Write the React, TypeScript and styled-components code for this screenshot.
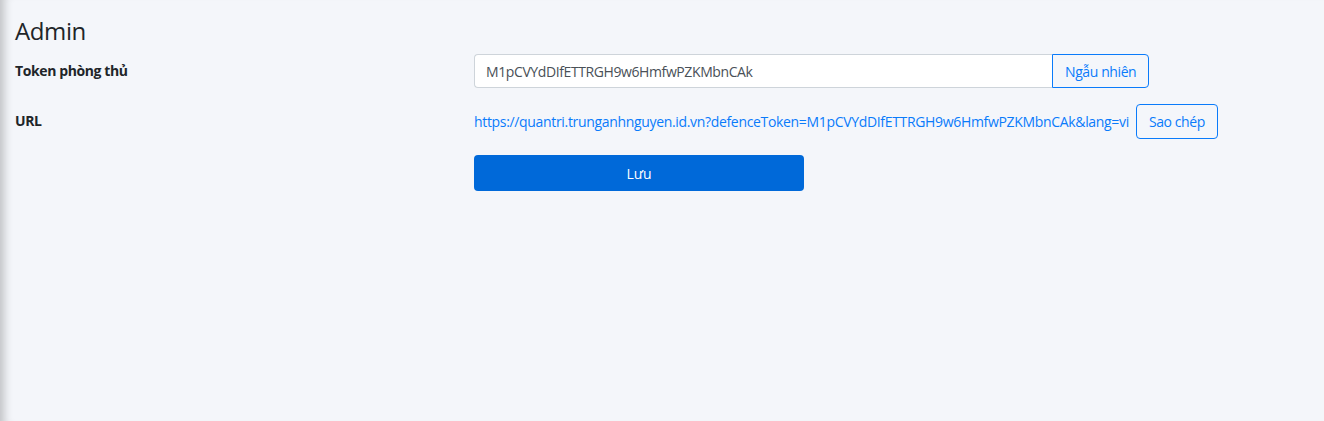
import React from "react";
import styled, { createGlobalStyle } from "styled-components";

const Global = createGlobalStyle`
  html, body { margin: 0; padding: 0; background: #f4f6fa; }
  body { font-family: "Open Sans", "Noto Sans", sans-serif; color: #212529; letter-spacing: -0.4px; }
`;

const Page = styled.div`
  min-height: 421px;
  box-sizing: border-box;
  padding: 14px 15px 0 15px;
  background: #f4f6fa;
  box-shadow: inset 12px 0 10px -8px rgba(0, 0, 0, 0.22);
`;

const Title = styled.h1`
  margin: 0 0 6px 0;
  font-size: 24px;
  font-weight: 400;
  line-height: 34px;
  color: #212529;
`;

const Form = styled.div`
  display: grid;
  grid-template-columns: 459px 1fr;
  row-gap: 16px;
  align-items: center;
`;

const Label = styled.div`
  font-size: 14px;
  font-weight: 700;
  color: #212529;
  align-self: start;
  line-height: 34px;
`;

const Field = styled.div`
  display: flex;
  align-items: center;
`;

const Input = styled.input`
  width: 578px;
  height: 34px;
  box-sizing: border-box;
  border: 1px solid #ced4da;
  border-right: none;
  border-radius: 4px 0 0 4px;
  padding: 0 11px;
  font-family: inherit;
  font-size: 14px;
  letter-spacing: -0.4px;
  color: #495057;
  background: #fff;
  outline: none;
`;

const OutlineButton = styled.button<{ $attached?: boolean }>`
  height: ${(p) => (p.$attached ? 34 : 35)}px;
  box-sizing: border-box;
  border: 1px solid #0a7bfa;
  border-radius: ${(p) => (p.$attached ? "0 4px 4px 0" : "4px")};
  background: transparent;
  color: #0a7bfa;
  font-family: inherit;
  font-size: 14px;
  letter-spacing: -0.4px;
  padding: 0 12px;
  margin-left: ${(p) => (p.$attached ? 0 : 7)}px;
  cursor: pointer;
`;

const Link = styled.a`
  color: #0a7bfa;
  font-size: 14px;
  letter-spacing: -0.33px;
  text-decoration: none;
  white-space: nowrap;
`;

const SaveButton = styled.button`
  width: 330px;
  height: 36px;
  border: none;
  border-radius: 4px;
  background: #0069d9;
  color: #fff;
  font-family: inherit;
  font-size: 14px;
  cursor: pointer;
`;

const token = "M1pCVYdDIfETTRGH9w6HmfwPZKMbnCAk";
const url = `https://quantri.trunganhnguyen.id.vn?defenceToken=${token}&lang=vi`;

export default function App() {
  return (
    <>
      <Global />
      <Page>
        <Title>Admin</Title>
        <Form>
          <Label>Token phòng thủ</Label>
          <Field>
            <Input defaultValue={token} />
            <OutlineButton $attached>Ngẫu nhiên</OutlineButton>
          </Field>
          <Label>URL</Label>
          <Field>
            <Link href="#">{url}</Link>
            <OutlineButton>Sao chép</OutlineButton>
          </Field>
          <div />
          <Field>
            <SaveButton>Lưu</SaveButton>
          </Field>
        </Form>
      </Page>
    </>
  );
}
